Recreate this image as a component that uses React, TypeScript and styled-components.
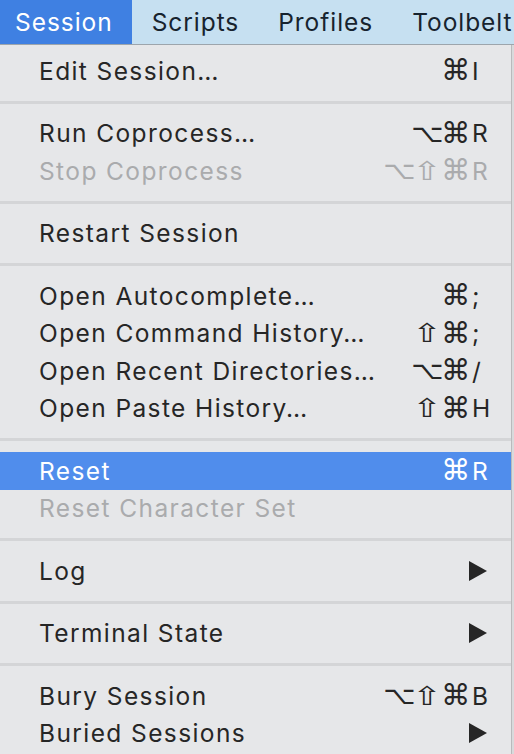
import React from "react";
import styled, { createGlobalStyle } from "styled-components";

const GlobalStyle = createGlobalStyle`
    html, body { margin: 0; padding: 0; }
    body {
        background: #e6e7e9;
        font-family: Inter, "Noto Sans", "DejaVu Sans", sans-serif;
        -webkit-font-smoothing: antialiased;
    }
`;

// Whole visible area
const Screen = styled.div`
    width: 514px; height: 754px;
    overflow: hidden;
    background: #d9dadc;
`;

// Top menubar
const MenuBar = styled.div`
    display: flex; align-items: center;
    height: 44px;
    margin-left: -4.5px;
    background: #c6e0f1;
    border-bottom: 1px solid #9da5ac;
`;
const BarItem = styled.div<{ $active?: boolean }>`
    display: flex; align-items: center;
    height: 100%;
    padding: 0 19.5px;
    font-size: 24.5px;
    letter-spacing: 0.95px;
    color: ${(p) => (p.$active ? "#ffffff" : "#17232e")};
    background: ${(p) => (p.$active ? "#3f80e2" : "transparent")};
    white-space: nowrap;
`;

// Dropdown panel
const Menu = styled.div`
    width: 512px;
    box-sizing: border-box;
    padding-top: 7px;
    background: #e6e7e9;
    border-right: 1px solid #b9babc;
    height: 709px;
`;
const Item = styled.div<{ $highlight?: boolean; $disabled?: boolean }>`
    display: flex; align-items: center;
    height: 37.5px;
    padding: 0 19px 0 39px;
    font-size: 24.5px;
    letter-spacing: 1.4px;
    color: ${(p) => (p.$highlight ? "#ffffff" : p.$disabled ? "#aaabad" : "#262626")};
    background: ${(p) => (p.$highlight ? "#508dec" : "transparent")};
`;
const Label = styled.span`
    flex: 1;
    white-space: nowrap;
`;
const Shortcut = styled.span`
    display: flex; align-items: center;
`;
// modifier glyph cell, size / stretch per symbol
const Mod = styled.span<{ $size: number; $stretch: number }>`
    display: inline-block;
    width: 28px;
    text-align: center;
    font-family: "DejaVu Sans", sans-serif;
    font-size: ${(p) => p.$size}px;
    line-height: 1;
    letter-spacing: 0;
    transform: scaleX(${(p) => p.$stretch});
`;
const Key = styled.span`
    display: inline-block;
    width: 20px;
    padding-left: 3px;
    text-align: left;
    letter-spacing: 0;
`;
const Arrow = styled.svg`
    width: 18px; height: 20px;
    margin-right: 5px;
`;
const Separator = styled.div`
    height: 25px;
    display: flex; align-items: center;
    &::after {
        content: "";
        flex: 1;
        height: 3px;
        background: #d4d5d7;
    }
`;

const modStyle: Record<string, { size: number; stretch: number }> = {
    "⌘": { size: 29, stretch: 1 },
    "⌥": { size: 25, stretch: 1.12 },
    "⇧": { size: 26, stretch: 1.35 },
};

type Entry =
    | { sep: true }
    | { label: string; mods?: string; keyChar?: string; sub?: boolean; disabled?: boolean; highlight?: boolean };

const entries: Entry[] = [
    { label: "Edit Session…", mods: "⌘", keyChar: "I" },
    { sep: true },
    { label: "Run Coprocess…", mods: "⌥⌘", keyChar: "R" },
    { label: "Stop Coprocess", mods: "⌥⇧⌘", keyChar: "R", disabled: true },
    { sep: true },
    { label: "Restart Session" },
    { sep: true },
    { label: "Open Autocomplete…", mods: "⌘", keyChar: ";" },
    { label: "Open Command History…", mods: "⇧⌘", keyChar: ";" },
    { label: "Open Recent Directories…", mods: "⌥⌘", keyChar: "/" },
    { label: "Open Paste History…", mods: "⇧⌘", keyChar: "H" },
    { sep: true },
    { label: "Reset", mods: "⌘", keyChar: "R", highlight: true },
    { label: "Reset Character Set", disabled: true },
    { sep: true },
    { label: "Log", sub: true },
    { sep: true },
    { label: "Terminal State", sub: true },
    { sep: true },
    { label: "Bury Session", mods: "⌥⇧⌘", keyChar: "B" },
    { label: "Buried Sessions", sub: true },
];

const SubArrow = () => (
    <Arrow viewBox="0 0 18 20">
        <path d="M0 0 L18 10 L0 20 Z" fill="#262626" />
    </Arrow>
);

export default function App() {
    return (
        <Screen>
            <GlobalStyle />
            <MenuBar>
                <BarItem $active>Session</BarItem>
                <BarItem>Scripts</BarItem>
                <BarItem>Profiles</BarItem>
                <BarItem>Toolbelt</BarItem>
            </MenuBar>
            <Menu>
                {entries.map((e, i) => {
                    if ("sep" in e) return <Separator key={i} />;
                    return (
                        <Item key={i} $highlight={e.highlight} $disabled={e.disabled}>
                            <Label>{e.label}</Label>
                            {e.keyChar && (
                                <Shortcut>
                                    {Array.from(e.mods || "").map((m, j) => (
                                        <Mod key={j} $size={modStyle[m].size} $stretch={modStyle[m].stretch}>
                                            {m}
                                        </Mod>
                                    ))}
                                    <Key>{e.keyChar}</Key>
                                </Shortcut>
                            )}
                            {e.sub && <SubArrow />}
                        </Item>
                    );
                })}
            </Menu>
        </Screen>
    );
}
